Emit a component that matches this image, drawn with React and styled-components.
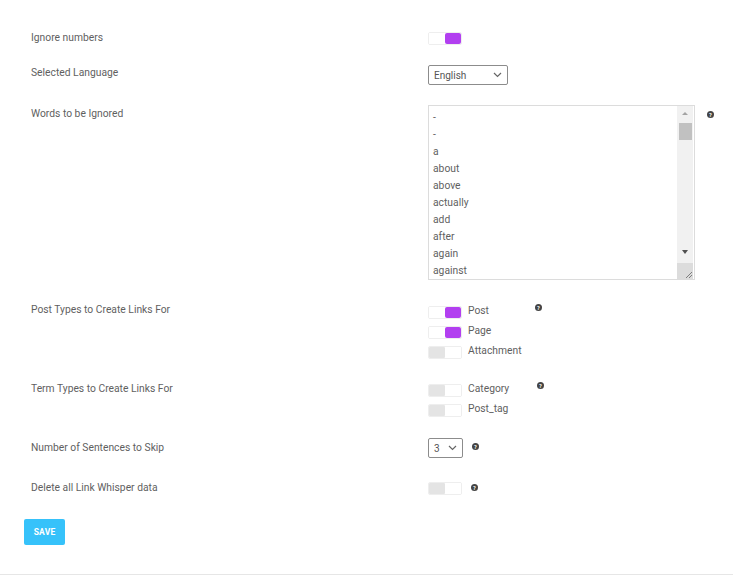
import React from 'react';
import styled, { createGlobalStyle } from 'styled-components';

const GlobalStyle = createGlobalStyle`
  html, body {
    margin: 0;
    padding: 0;
    background: #fff;
  }
  body {
    font-family: Roboto, 'Liberation Sans', sans-serif;
    color: #5f5f5f;
  }
`;

const WORDS = ['-', '-', 'a', 'about', 'above', 'actually', 'add', 'after', 'again', 'against'];

const HelpIcon = () => (
  <HelpWrap>
    <svg width="7" height="7" viewBox="0 0 8 8">
      <circle cx="4" cy="4" r="4" fill="#444" />
      <text x="4" y="6.3" fontSize="6.5" fill="#fff" textAnchor="middle" fontFamily="Roboto, sans-serif" fontWeight="700">?</text>
    </svg>
  </HelpWrap>
);

const Chevron = () => (
  <svg width="9" height="6" viewBox="0 0 9 6">
    <path d="M1 1 L4.5 4.5 L8 1" fill="none" stroke="#666" strokeWidth="1.2" />
  </svg>
);

const Toggle = ({ on }) => (
  <ToggleBox>
    <ToggleHalf $fill={on ? '#fff' : '#e4e4e4'} />
    <ToggleHalf $fill={on ? '#b23ff0' : '#fff'} $round={on} />
  </ToggleBox>
);

const App = () => {
  return (
    <>
      <GlobalStyle />
      <Page>
        <Row $gap={20}>
          <Label $offset={0}>Ignore numbers</Label>
          <Control>
            <Toggle on />
          </Control>
        </Row>

        <Row $gap={20}>
          <Label $offset={2}>Selected Language</Label>
          <Control>
            <Select $width={80}>
              <span>English</span>
              <Chevron />
            </Select>
          </Control>
        </Row>

        <Row $gap={26}>
          <Label $offset={3}>Words to be Ignored</Label>
          <Control>
            <ListBox>
              <WordList>
                {WORDS.map((w, i) => (
                  <Word key={i}>{w}</Word>
                ))}
              </WordList>
              <ScrollBar>
                <ArrowUp />
                <Thumb />
                <Track />
                <ArrowDown />
                <Resize>
                  <svg width="10" height="10" viewBox="0 0 10 10">
                    <path d="M9 3 L3 9 M9 6 L6 9" stroke="#666" strokeWidth="0.8" />
                  </svg>
                </Resize>
              </ScrollBar>
            </ListBox>
            <HelpSide $top={6} $left={12}>
              <HelpIcon />
            </HelpSide>
          </Control>
        </Row>

        <Row $gap={25}>
          <Label $offset={-2}>Post Types to Create Links For</Label>
          <Control>
            <OptionList>
              <Option>
                <Toggle on />
                <OptionText>Post</OptionText>
                <HelpSide $top={-2} $left={46}>
                  <HelpIcon />
                </HelpSide>
              </Option>
              <Option>
                <Toggle on />
                <OptionText>Page</OptionText>
              </Option>
              <Option>
                <Toggle />
                <OptionText>Attachment</OptionText>
              </Option>
            </OptionList>
          </Control>
        </Row>

        <Row $gap={21}>
          <Label $offset={-1}>Term Types to Create Links For</Label>
          <Control>
            <OptionList>
              <Option>
                <Toggle />
                <OptionText>Category</OptionText>
                <HelpSide $top={-2} $left={28}>
                  <HelpIcon />
                </HelpSide>
              </Option>
              <Option>
                <Toggle />
                <OptionText>Post_tag</OptionText>
              </Option>
            </OptionList>
          </Control>
        </Row>

        <Row $gap={24}>
          <Label $offset={4}>Number of Sentences to Skip</Label>
          <Control>
            <Select $width={35}>
              <span>3</span>
              <Chevron />
            </Select>
            <HelpSide $top={5} $left={9}>
              <HelpIcon />
            </HelpSide>
          </Control>
        </Row>

        <Row $gap={24}>
          <Label $offset={0}>Delete all Link Whisper data</Label>
          <Control>
            <Toggle />
            <HelpSide $top={2} $left={9}>
              <HelpIcon />
            </HelpSide>
          </Control>
        </Row>

        <SaveButton>SAVE</SaveButton>
      </Page>
      <BottomLine />
    </>
  );
};

const Page = styled.div`
  padding: 32px 0 0 24px;
  height: 542px;
  box-sizing: border-box;
`;

const Row = styled.div`
  display: flex;
  align-items: flex-start;
  padding-left: 7px;
  margin-bottom: ${(p) => p.$gap}px;
`;

const Label = styled.div`
  width: 397px;
  flex-shrink: 0;
  font-size: 10.3px;
  line-height: 12px;
  color: #5f5f5f;
  margin-top: ${(p) => p.$offset}px;
`;

const Control = styled.div`
  display: flex;
  align-items: flex-start;
`;

const ToggleBox = styled.div`
  display: flex;
  width: 34px;
  height: 13px;
  border: 1px solid #eee;
  box-sizing: border-box;
  border-radius: 2px;
  flex-shrink: 0;
`;

const ToggleHalf = styled.div`
  flex: 1;
  background: ${(p) => p.$fill};
  border-radius: ${(p) => (p.$round ? '2px' : '1px')};
`;

const Select = styled.div`
  width: ${(p) => p.$width}px;
  height: 20px;
  box-sizing: border-box;
  border: 1px solid #8c8c8c;
  border-radius: 2px;
  display: flex;
  align-items: center;
  justify-content: space-between;
  padding: 0 5px 0 5px;
  font-size: 10px;
  color: #555;
`;

const ListBox = styled.div`
  width: 267px;
  height: 175px;
  box-sizing: border-box;
  border: 1px solid #dcdcdc;
  display: flex;
  overflow: hidden;
`;

const WordList = styled.div`
  flex: 1;
  padding: 3px 0 0 4px;
`;

const Word = styled.div`
  font-size: 10.3px;
  line-height: 17px;
  color: #5f5f5f;
`;

const ScrollBar = styled.div`
  width: 16px;
  margin-right: 1px;
  display: flex;
  flex-direction: column;
  align-items: center;
  background: #f1f1f1;
`;

const ArrowUp = styled.div`
  margin-top: 6px;
  width: 0;
  height: 0;
  border-left: 3px solid transparent;
  border-right: 3px solid transparent;
  border-bottom: 3px solid #a3a3a3;
`;

const Thumb = styled.div`
  margin-top: 8px;
  width: 13px;
  height: 17px;
  background: #c1c1c1;
`;

const Track = styled.div`
  flex: 1;
`;

const ArrowDown = styled.div`
  margin-bottom: 9px;
  width: 0;
  height: 0;
  border-left: 3px solid transparent;
  border-right: 3px solid transparent;
  border-top: 4px solid #505050;
`;

const Resize = styled.div`
  width: 16px;
  height: 16px;
  background: #dcdcdc;
  display: flex;
  align-items: flex-end;
  justify-content: flex-end;
`;

const HelpWrap = styled.span`
  display: inline-flex;
`;

const HelpSide = styled.div`
  margin-top: ${(p) => p.$top}px;
  margin-left: ${(p) => p.$left}px;
  display: flex;
`;

const OptionList = styled.div`
  display: flex;
  flex-direction: column;
  gap: 7px;
`;

const Option = styled.div`
  display: flex;
  align-items: flex-start;
`;

const OptionText = styled.span`
  margin-left: 6px;
  margin-top: -1px;
  font-size: 10.3px;
  line-height: 12px;
  color: #5f5f5f;
`;

const SaveButton = styled.button`
  margin-top: 0;
  width: 41px;
  height: 26px;
  border: none;
  border-radius: 2px;
  background: #36c2fa;
  color: #fff;
  font-family: Roboto, 'Liberation Sans', sans-serif;
  font-weight: 700;
  font-size: 8.5px;
  letter-spacing: 0.2px;
  padding: 0;
`;

const BottomLine = styled.div`
  margin-top: 32px;
  height: 1px;
  background: #e6e6e6;
`;

export default App;
